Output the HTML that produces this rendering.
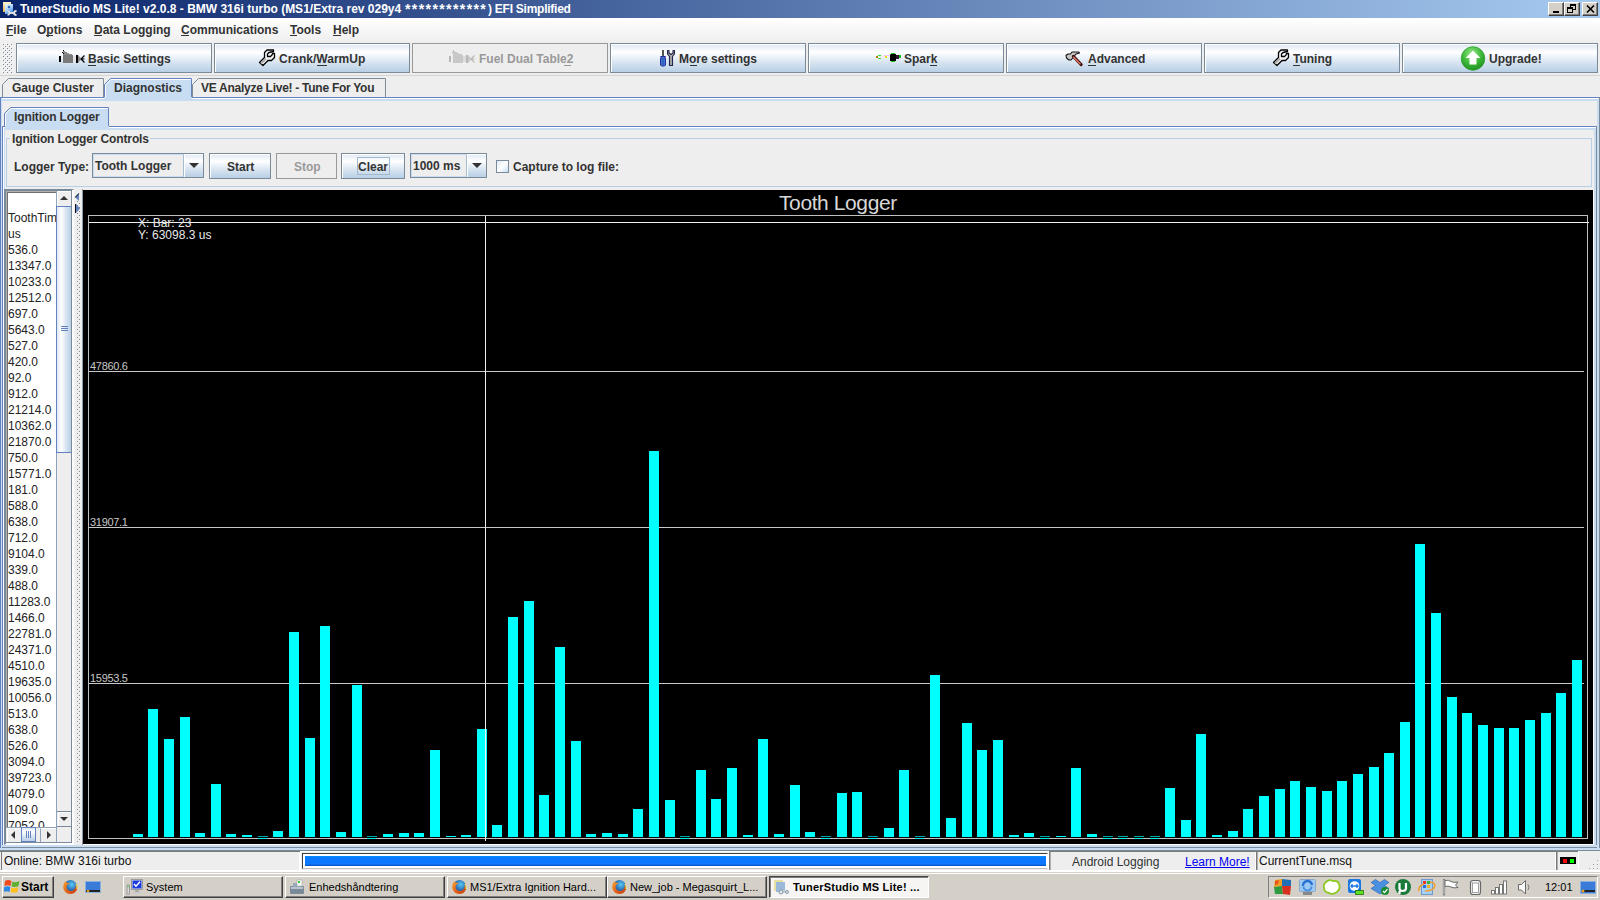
<!DOCTYPE html>
<html><head><meta charset="utf-8">
<style>
*{box-sizing:border-box}
html,body{margin:0;padding:0}
body{width:1600px;height:900px;overflow:hidden;position:relative;background:#eeeeee;font-family:"Liberation Sans",sans-serif;color:#333333}
.a{position:absolute}
.t{position:absolute;white-space:nowrap;line-height:1}
.b12{font-weight:bold;font-size:12px}
.r12{font-size:12px}
u{text-decoration:none;border-bottom:1px solid currentColor}
.btn{position:absolute;border:1px solid #7a8a99;background:linear-gradient(#dde8f3 0%,#ffffff 30%,#dde8f3 60%,#b8cfe5 100%)}
.btn:before{content:"";position:absolute;left:0;top:0;right:0;bottom:0;border-left:1px solid #fff;border-top:1px solid #fff}
.dis{position:absolute;border:1px solid #999;background:#eeeeee}
</style></head><body>
<!-- title bar -->
<div class="a" style="left:0;top:0;width:1600px;height:18px;background:linear-gradient(to right,#0a246a 0%,#a6caf0 100%)"></div>
<svg class="a" style="left:0;top:0" width="18" height="18" viewBox="0 0 18 18">
<defs><linearGradient id="tiy" x1="0" y1="0" x2="0" y2="1"><stop offset="0" stop-color="#fff4c8"/><stop offset="1" stop-color="#e8b850"/></linearGradient><linearGradient id="tib" x1="0" y1="0" x2="0.6" y2="1"><stop offset="0" stop-color="#f0f8ff"/><stop offset="0.5" stop-color="#b8d8f8"/><stop offset="1" stop-color="#3a90f0"/></linearGradient></defs>
<path d="M3 2 L11 2 L11 4 L5 4 L5 12 L3 12 Z" fill="url(#tiy)"/>
<rect x="5" y="4" width="8" height="10" fill="url(#tib)"/>
<circle cx="9" cy="7" r="1.3" fill="#2a6ab8"/>
<path d="M8.5 13 L15 13" stroke="#d8d8d8" stroke-width="2"/><path d="M7.5 11 Q9.5 11 9.5 13 Q9.5 15 7.5 15" stroke="#e0e0e0" stroke-width="1.5" fill="none"/><path d="M16.5 11 Q14 11 14 13 Q14 15 16.5 15" stroke="#e8e8e8" stroke-width="1.8" fill="none"/>
</svg>
<div class="t" style="left:20px;top:3px;font-weight:bold;font-size:12px;color:#fff">TunerStudio MS Lite! v2.0.8 - BMW 316i turbo (MS1/Extra rev 029y4</div>
<div class="t" style="left:405px;top:2px;font-weight:bold;font-size:14px;letter-spacing:1.4px;color:#fff">************</div>
<div class="t" style="left:488px;top:3px;font-weight:bold;font-size:12px;letter-spacing:-0.25px;color:#fff">) EFI Simplified</div>
<!-- window buttons -->
<div class="a" style="left:1548px;top:2px;width:16px;height:14px;background:#d4d0c8;border-top:1px solid #fff;border-left:1px solid #fff;border-right:1px solid #404040;border-bottom:1px solid #404040;box-shadow:inset -1px -1px #808080"><div class="a" style="left:4px;top:8px;width:6px;height:2px;background:#000"></div></div>
<div class="a" style="left:1564px;top:2px;width:16px;height:14px;background:#d4d0c8;border-top:1px solid #fff;border-left:1px solid #fff;border-right:1px solid #404040;border-bottom:1px solid #404040;box-shadow:inset -1px -1px #808080"><div class="a" style="left:5px;top:1px;width:6px;height:6px;border:1px solid #000;border-top-width:2px"></div><div class="a" style="left:2px;top:4px;width:6px;height:6px;border:1px solid #000;border-top-width:2px;background:#d4d0c8"></div></div>
<div class="a" style="left:1582px;top:2px;width:16px;height:14px;background:#d4d0c8;border-top:1px solid #fff;border-left:1px solid #fff;border-right:1px solid #404040;border-bottom:1px solid #404040;box-shadow:inset -1px -1px #808080"><svg class="a" style="left:3px;top:2px" width="9" height="8" viewBox="0 0 9 8"><path d="M1 0.5 L8 7.5 M8 0.5 L1 7.5" stroke="#000" stroke-width="1.6"/></svg></div>
<!-- menu bar -->
<div class="a" style="left:0;top:18px;width:1600px;height:24px;background:linear-gradient(#ffffff,#efefef)"></div>
<div class="t b12" style="left:6px;top:24px;color:#333">File</div>
<div class="t b12" style="left:37px;top:24px;color:#333">Options</div>
<div class="t b12" style="left:94px;top:24px;color:#333">Data Logging</div>
<div class="t b12" style="left:181px;top:24px;color:#333">Communications</div>
<div class="t b12" style="left:290px;top:24px;color:#333">Tools</div>
<div class="t b12" style="left:333px;top:24px;color:#333">Help</div>
<!-- menu underlines -->
<div class="a" style="left:6px;top:35px;width:7px;height:1px;background:#333"></div>
<div class="a" style="left:46px;top:35px;width:7px;height:1px;background:#333"></div>
<div class="a" style="left:94px;top:35px;width:8px;height:1px;background:#333"></div>
<div class="a" style="left:181px;top:35px;width:8px;height:1px;background:#333"></div>
<div class="a" style="left:290px;top:35px;width:7px;height:1px;background:#333"></div>
<div class="a" style="left:333px;top:35px;width:8px;height:1px;background:#333"></div>
<!-- toolbar grip -->
<svg class="a" style="left:2px;top:43px" width="11" height="30" shape-rendering="crispEdges"><defs><pattern id="gp" x="0" y="0" width="4" height="4" patternUnits="userSpaceOnUse"><rect x="1" y="1" width="1" height="1" fill="#7a8a99"/><rect x="3" y="3" width="1" height="1" fill="#7a8a99"/><rect x="2" y="2" width="1" height="1" fill="#fff"/><rect x="0" y="0" width="1" height="1" fill="#fff"/></pattern></defs><rect width="11" height="30" fill="url(#gp)"/></svg>
<div class="a" style="left:0;top:75px;width:1600px;height:1px;background:#d4d4d4"></div>
<!-- buttons -->
<div class="btn" style="left:16px;top:43px;width:196px;height:30px"></div>
<div class="btn" style="left:214px;top:43px;width:196px;height:30px"></div>
<div class="dis" style="left:412px;top:43px;width:196px;height:30px"></div>
<div class="btn" style="left:610px;top:43px;width:196px;height:30px"></div>
<div class="btn" style="left:808px;top:43px;width:196px;height:30px"></div>
<div class="btn" style="left:1006px;top:43px;width:196px;height:30px"></div>
<div class="btn" style="left:1204px;top:43px;width:196px;height:30px"></div>
<div class="btn" style="left:1402px;top:43px;width:196px;height:30px"></div>
<div class="t b12" style="left:88px;top:53px">Basic Settings</div>
<div class="a" style="left:88px;top:65px;width:8px;height:1px;background:#333"></div>
<div class="t b12" style="left:279px;top:53px">Crank/WarmUp</div>
<div class="a" style="left:317px;top:65px;width:10px;height:1px;background:#333"></div>
<div class="t b12" style="left:479px;top:53px;color:#999">Fuel Dual Table2</div>
<div class="a" style="left:564px;top:65px;width:7px;height:1px;background:#999"></div>
<div class="t b12" style="left:679px;top:53px">More settings</div>
<div class="a" style="left:690px;top:65px;width:7px;height:1px;background:#333"></div>
<div class="t b12" style="left:904px;top:53px">Spark</div>
<div class="a" style="left:930px;top:65px;width:7px;height:1px;background:#333"></div>
<div class="t b12" style="left:1088px;top:53px">Advanced</div>
<div class="a" style="left:1088px;top:65px;width:8px;height:1px;background:#333"></div>
<div class="t b12" style="left:1293px;top:53px">Tuning</div>
<div class="a" style="left:1293px;top:65px;width:7px;height:1px;background:#333"></div>
<div class="t b12" style="left:1489px;top:53px">Upgrade!</div>
<!-- icons -->
<svg class="a" style="left:58px;top:49px" width="28" height="16" viewBox="0 0 28 16" shape-rendering="crispEdges">
<rect x="1" y="7" width="2" height="6" fill="#000"/><rect x="5" y="6" width="10" height="8" fill="#7a7a7a"/><path d="M5 6 L5.5 2 L15 6 Z" fill="#8a8a8a"/><rect x="5" y="1" width="1" height="1" fill="#000"/><rect x="4" y="3" width="1" height="1" fill="#000"/><rect x="5" y="4" width="1" height="1" fill="#000"/><rect x="15" y="7" width="3" height="6" fill="#e4e4e4"/><rect x="18" y="6" width="2" height="8" fill="#000"/><path d="M20 6 L23.5 10 L20 14 Z" fill="#8a8a8a" shape-rendering="auto"/><path d="M23 10 L26.5 6.5 M23 10 L26.5 10 M23 10 L26.5 13.5" stroke="#000" stroke-width="1.2" shape-rendering="auto"/>
</svg>
<svg class="a" style="left:448px;top:49px" width="28" height="16" viewBox="0 0 28 16" shape-rendering="crispEdges">
<rect x="1" y="7" width="2" height="6" fill="#b8b8b8"/><rect x="5" y="6" width="10" height="8" fill="#c8c8c8"/><path d="M5 6 L5.5 2 L15 6 Z" fill="#c8c8c8"/><rect x="5" y="1" width="1" height="1" fill="#b8b8b8"/><rect x="4" y="3" width="1" height="1" fill="#b8b8b8"/><rect x="15" y="7" width="3" height="6" fill="#dcdcdc"/><rect x="18" y="6" width="2" height="8" fill="#b8b8b8"/><path d="M20 6 L23.5 10 L20 14 Z" fill="#c8c8c8" shape-rendering="auto"/><path d="M23 10 L26.5 6.5 M23 10 L26.5 10 M23 10 L26.5 13.5" stroke="#b8b8b8" stroke-width="1.2" shape-rendering="auto"/>
</svg>
<svg class="a" style="left:258px;top:49px" width="18" height="18" viewBox="0 0 18 18">
<path d="M1.5 13.5 L6.5 8.5 L6.5 3.5 L9 1 L15.5 1 L15.5 2.5 L11 3.5 L9.5 5 L9.5 7.5 L12.5 7.5 L14 6 L14.5 4.5 L16.5 4.5 L16.5 8.5 L13.5 11.5 L10 11.5 L5 16.5 Z" fill="#f4f4f4" stroke="#000" stroke-width="1.3" stroke-linejoin="round"/>
<path d="M3 14.5 L8 9.5" stroke="#b0b0b0" stroke-width="2"/>
</svg>
<svg class="a" style="left:1272px;top:49px" width="18" height="18" viewBox="0 0 18 18">
<path d="M1.5 13.5 L6.5 8.5 L6.5 3.5 L9 1 L15.5 1 L15.5 2.5 L11 3.5 L9.5 5 L9.5 7.5 L12.5 7.5 L14 6 L14.5 4.5 L16.5 4.5 L16.5 8.5 L13.5 11.5 L10 11.5 L5 16.5 Z" fill="#f4f4f4" stroke="#000" stroke-width="1.3" stroke-linejoin="round"/>
<path d="M3 14.5 L8 9.5" stroke="#b0b0b0" stroke-width="2"/>
</svg>
<svg class="a" style="left:660px;top:49px" width="16" height="18" viewBox="0 0 16 18">
<rect x="2" y="1" width="2" height="6" fill="#555"/><path d="M0.5 7.5 L5.5 7.5 L4.5 9 L5.5 9 L5.5 16 L4.5 17 L1.5 17 L0.5 16 L0.5 9 L1.5 9 Z" fill="#3a7ad0" stroke="#2a2a9a" stroke-width="1"/><rect x="2.5" y="9" width="1" height="7" fill="#2a4ab0"/>
<path d="M7.5 1.5 L7.5 5 L9.5 7.5 L9.5 16.5 L12.5 16.5 L12.5 7.5 L14.5 5 L14.5 1.5 L13 1.5 L13 4 L11 5.5 L9 4 L9 1.5 Z" fill="#a8a8a8" stroke="#22224a" stroke-width="1.1" stroke-linejoin="round"/>
</svg>
<svg class="a" style="left:875px;top:53px" width="26" height="10" viewBox="0 0 26 10" shape-rendering="crispEdges">
<rect x="1" y="3" width="2" height="2" fill="#b08000"/><rect x="3" y="2" width="3" height="1" fill="#30e030"/><rect x="3" y="5" width="3" height="1" fill="#30e030"/><rect x="6" y="3" width="3" height="2" fill="#f4e8f4"/><rect x="10" y="3" width="2" height="2" fill="#e8e000"/><rect x="9" y="2" width="6" height="1" fill="#f0c8f0"/><rect x="15" y="1" width="6" height="7" fill="#000"/><rect x="16" y="0" width="4" height="1" fill="#20c020"/><rect x="16" y="8" width="4" height="1" fill="#20c020"/><rect x="15" y="1" width="1" height="1" fill="#20a020"/><rect x="21" y="2" width="3" height="4" fill="#301830"/><rect x="24" y="2" width="2" height="3" fill="#10c010"/>
</svg>
<svg class="a" style="left:1065px;top:51px" width="18" height="16" viewBox="0 0 18 16">
<path d="M1 4.5 L3 3 L5.5 3 L7 1 L13.5 1 L14.5 2 L11 3 L9 5.5 L6 9 L4 9 L1.5 7 Z" fill="#c8c8c8" stroke="#111" stroke-width="1.1" stroke-linejoin="round"/>
<path d="M8.5 5.5 L16 13.5" stroke="#3a0a0a" stroke-width="3.2" stroke-linecap="round"/><path d="M8.3 5.8 L15.5 13.3" stroke="#e8806a" stroke-width="1.3"/>
</svg>
<svg class="a" style="left:1460px;top:46px" width="26" height="25" viewBox="0 0 26 25">
<defs><radialGradient id="gg" cx="0.45" cy="0.3" r="0.75"><stop offset="0" stop-color="#9ae884"/><stop offset="0.55" stop-color="#3cb83a"/><stop offset="1" stop-color="#1c8a1c"/></radialGradient></defs>
<circle cx="13" cy="12.5" r="11.8" fill="url(#gg)" stroke="#30a030" stroke-width="0.8"/><path d="M13 4.5 L20.5 12 L16.5 12 L16.5 18.5 L9.5 18.5 L9.5 12 L5.5 12 Z" fill="#fff"/>
</svg>
<!-- outer tabs -->
<svg class="a" style="left:0;top:76px" width="400" height="26" viewBox="0 0 400 26">
<path d="M2.5 21.5 L2.5 8.5 L8.5 2.5 L103.5 2.5 L103.5 21.5" fill="#eeeeee" stroke="#7e8c9a" stroke-width="1"/>
<path d="M192.5 21.5 L192.5 8.5 L198.5 2.5 L385.5 2.5 L385.5 21.5" fill="#eeeeee" stroke="#7e8c9a" stroke-width="1"/>
<path d="M104.5 22 L104.5 8.5 L110.5 2.5 L191.5 2.5 L191.5 22" fill="#c8ddf2" stroke="#6382bf" stroke-width="1"/>
<path d="M105.5 22 L105.5 9 L111 3.5 L191 3.5" fill="none" stroke="#ffffff" stroke-width="1"/>
<rect x="104" y="21" width="88" height="4" fill="#c8ddf2"/>
</svg>
<!-- outer panel -->
<div class="a" style="left:0;top:97px;width:104px;height:1px;background:#6382bf"></div>
<div class="a" style="left:192px;top:97px;width:1408px;height:1px;background:#6382bf"></div>
<div class="a" style="left:1px;top:98px;width:103px;height:1px;background:#fff"></div>
<div class="a" style="left:192px;top:98px;width:1406px;height:1px;background:#fff"></div>
<div class="a" style="left:1px;top:99px;width:1597px;height:2px;background:#c8ddf2"></div>
<div class="a" style="left:0;top:97px;width:1px;height:754px;background:#6382bf"></div>
<div class="a" style="left:1px;top:98px;width:1px;height:752px;background:#c8ddf2"></div>
<div class="a" style="left:1599px;top:97px;width:1px;height:754px;background:#7a8a99"></div>
<div class="a" style="left:1597px;top:99px;width:2px;height:752px;background:#c8ddf2"></div>
<div class="a" style="left:0;top:848px;width:1600px;height:2px;background:#c8ddf2"></div>
<div class="a" style="left:0;top:850px;width:1600px;height:1px;background:#7a8a99"></div>
<!-- inner tab -->
<svg class="a" style="left:0;top:105px" width="120" height="26" viewBox="0 0 120 26">
<path d="M4.5 22 L4.5 8.5 L10.5 2.5 L108.5 2.5 L108.5 22" fill="#c8ddf2" stroke="#6382bf" stroke-width="1"/>
<path d="M5.5 22 L5.5 9 L11 3.5 L108 3.5" fill="none" stroke="#ffffff" stroke-width="1"/>
<rect x="4" y="21" width="105" height="4" fill="#c8ddf2"/>
</svg>
<div class="t b12" style="left:114px;top:82px">Diagnostics</div>
<div class="t b12" style="left:12px;top:82px">Gauge Cluster</div>
<div class="t b12" style="left:201px;top:82px;letter-spacing:-0.27px">VE Analyze Live! - Tune For You</div>
<div class="t b12" style="left:14px;top:111px;letter-spacing:-0.12px">Ignition Logger</div>
<!-- inner panel -->
<div class="a" style="left:2px;top:126px;width:3px;height:1px;background:#6382bf"></div>
<div class="a" style="left:109px;top:126px;width:1488px;height:1px;background:#6382bf"></div>
<div class="a" style="left:3px;top:127px;width:2px;height:1px;background:#fff"></div>
<div class="a" style="left:109px;top:127px;width:1487px;height:1px;background:#fff"></div>
<div class="a" style="left:3px;top:128px;width:1593px;height:2px;background:#c8ddf2"></div>
<div class="a" style="left:2px;top:126px;width:1px;height:722px;background:#6382bf"></div>
<div class="a" style="left:3px;top:127px;width:1px;height:720px;background:#ffffff"></div>
<div class="a" style="left:4px;top:128px;width:1px;height:717px;background:#c8ddf2"></div>
<div class="a" style="left:1596px;top:126px;width:1px;height:722px;background:#7a8a99"></div>
<div class="a" style="left:1594px;top:128px;width:2px;height:718px;background:#c8ddf2"></div>
<div class="a" style="left:2px;top:845px;width:1595px;height:2px;background:#c8ddf2"></div>
<div class="a" style="left:2px;top:847px;width:1595px;height:1px;background:#7a8a99"></div>
<!-- group box -->
<div class="a" style="left:6px;top:138px;width:1586px;height:49px;border:1px solid #b8cfe5"></div>
<div class="a" style="left:10px;top:132px;width:140px;height:12px;background:#eeeeee"></div>
<div class="t b12" style="left:12px;top:133px;letter-spacing:-0.13px">Ignition Logger Controls</div>
<div class="t b12" style="left:14px;top:161px">Logger Type:</div>
<!-- combo 1 -->
<div class="a" style="left:92px;top:153px;width:112px;height:25px;border:1px solid #7a8a99;background:#eeeeee"></div>
<div class="a" style="left:93px;top:154px;width:91px;height:23px;border:1px solid #c8ddf2;border-right-color:#a8bcd0"></div>
<div class="t b12" style="left:95px;top:160px;color:#333">Tooth Logger</div>
<div class="btn" style="left:184px;top:153px;width:20px;height:25px;border-left:none"></div>
<div class="a" style="left:189px;top:163px;width:0;height:0;border-left:5px solid transparent;border-right:5px solid transparent;border-top:5px solid #333"></div>
<!-- buttons -->
<div class="btn" style="left:209px;top:153px;width:62px;height:26px"></div>
<div class="t b12" style="left:227px;top:161px">Start</div>
<div class="dis" style="left:276px;top:153px;width:61px;height:26px"></div>
<div class="t b12" style="left:294px;top:161px;color:#999">Stop</div>
<div class="btn" style="left:341px;top:153px;width:64px;height:26px"></div>
<div class="a" style="left:357px;top:157px;width:33px;height:18px;border:1px solid #a3b8cc"></div>
<div class="t b12" style="left:358px;top:161px">Clear</div>
<!-- combo 2 -->
<div class="a" style="left:410px;top:153px;width:77px;height:25px;border:1px solid #7a8a99;background:#eeeeee"></div>
<div class="a" style="left:411px;top:154px;width:56px;height:23px;border:1px solid #c8ddf2;border-right-color:#a8bcd0"></div>
<div class="t b12" style="left:413px;top:160px;color:#333">1000 ms</div>
<div class="btn" style="left:467px;top:153px;width:20px;height:25px;border-left:none"></div>
<div class="a" style="left:472px;top:163px;width:0;height:0;border-left:5px solid transparent;border-right:5px solid transparent;border-top:5px solid #333"></div>
<!-- checkbox -->
<div class="a" style="left:496px;top:160px;width:13px;height:13px;border:1px solid #7a8a99;background:linear-gradient(135deg,#dde8f3,#ffffff 50%,#c8ddf2)"></div>
<div class="t b12" style="left:513px;top:161px">Capture to log file:</div>
<div class="a" style="left:4px;top:189px;width:70px;height:656px;border-left:2px solid #7a8a99;border-top:2px solid #7a8a99;border-right:2px solid #fff;border-bottom:1px solid #fff;background:#fff"></div>
<div class="a" style="left:8px;top:191px;width:48px;height:636px;overflow:hidden;background:#fff">
<div class="t r12" style="left:0;top:21px;color:#222">ToothTime</div>
<div class="t r12" style="left:0;top:37px;color:#222">us</div>
<div class="t r12" style="left:0;top:53px;color:#222">536.0</div>
<div class="t r12" style="left:0;top:69px;color:#222">13347.0</div>
<div class="t r12" style="left:0;top:85px;color:#222">10233.0</div>
<div class="t r12" style="left:0;top:101px;color:#222">12512.0</div>
<div class="t r12" style="left:0;top:117px;color:#222">697.0</div>
<div class="t r12" style="left:0;top:133px;color:#222">5643.0</div>
<div class="t r12" style="left:0;top:149px;color:#222">527.0</div>
<div class="t r12" style="left:0;top:165px;color:#222">420.0</div>
<div class="t r12" style="left:0;top:181px;color:#222">92.0</div>
<div class="t r12" style="left:0;top:197px;color:#222">912.0</div>
<div class="t r12" style="left:0;top:213px;color:#222">21214.0</div>
<div class="t r12" style="left:0;top:229px;color:#222">10362.0</div>
<div class="t r12" style="left:0;top:245px;color:#222">21870.0</div>
<div class="t r12" style="left:0;top:261px;color:#222">750.0</div>
<div class="t r12" style="left:0;top:277px;color:#222">15771.0</div>
<div class="t r12" style="left:0;top:293px;color:#222">181.0</div>
<div class="t r12" style="left:0;top:309px;color:#222">588.0</div>
<div class="t r12" style="left:0;top:325px;color:#222">638.0</div>
<div class="t r12" style="left:0;top:341px;color:#222">712.0</div>
<div class="t r12" style="left:0;top:357px;color:#222">9104.0</div>
<div class="t r12" style="left:0;top:373px;color:#222">339.0</div>
<div class="t r12" style="left:0;top:389px;color:#222">488.0</div>
<div class="t r12" style="left:0;top:405px;color:#222">11283.0</div>
<div class="t r12" style="left:0;top:421px;color:#222">1466.0</div>
<div class="t r12" style="left:0;top:437px;color:#222">22781.0</div>
<div class="t r12" style="left:0;top:453px;color:#222">24371.0</div>
<div class="t r12" style="left:0;top:469px;color:#222">4510.0</div>
<div class="t r12" style="left:0;top:485px;color:#222">19635.0</div>
<div class="t r12" style="left:0;top:501px;color:#222">10056.0</div>
<div class="t r12" style="left:0;top:517px;color:#222">513.0</div>
<div class="t r12" style="left:0;top:533px;color:#222">638.0</div>
<div class="t r12" style="left:0;top:549px;color:#222">526.0</div>
<div class="t r12" style="left:0;top:565px;color:#222">3094.0</div>
<div class="t r12" style="left:0;top:581px;color:#222">39723.0</div>
<div class="t r12" style="left:0;top:597px;color:#222">4079.0</div>
<div class="t r12" style="left:0;top:613px;color:#222">109.0</div>
<div class="t r12" style="left:0;top:629px;color:#222">7052.0</div>
</div>
<div class="a" style="left:6px;top:191px;width:50px;height:636px;border-left:1px solid #b0b0b0;border-top:1px solid #b0b0b0"></div>
<div class="a" style="left:7px;top:192px;width:49px;height:635px;border-left:1px solid #707070;border-top:1px solid #707070"></div>
<div class="a" style="left:56px;top:191px;width:16px;height:636px;background:#eeeeee;border-left:1px solid #8fa3b8;border-right:1px solid #7a8a99"></div>
<div class="a" style="left:57px;top:191px;width:14px;height:15px;background:#eeeeee;border-top:1px solid #fff;border-left:1px solid #fff"></div>
<div class="a" style="left:60px;top:196px;width:0;height:0;border-left:4px solid transparent;border-right:4px solid transparent;border-bottom:4px solid #333"></div>
<div class="a" style="left:56px;top:206px;width:15px;height:247px;border:1px solid #6382bf;border-right:none;background:linear-gradient(to right,#dde8f3 0%,#ffffff 30%,#dde8f3 60%,#b8cfe5 100%)"></div>
<div class="a" style="left:61px;top:326px;width:7px;height:1px;background:#6382bf;box-shadow:0 2px #6382bf,0 4px #6382bf"></div>
<div class="a" style="left:57px;top:811px;width:14px;height:16px;background:#eeeeee;border-top:1px solid #7a8a99;border-bottom:1px solid #7a8a99"></div>
<div class="a" style="left:58px;top:812px;width:13px;height:14px;border-top:1px solid #fff;border-left:1px solid #fff"></div>
<div class="a" style="left:60px;top:817px;width:0;height:0;border-left:4px solid transparent;border-right:4px solid transparent;border-top:4px solid #333"></div>
<div class="a" style="left:6px;top:827px;width:50px;height:16px;background:#eeeeee;border-top:1px solid #8fa3b8;border-bottom:1px solid #7a8a99"></div>
<div class="a" style="left:7px;top:828px;width:14px;height:14px;border-top:1px solid #fff;border-left:1px solid #fff"></div>
<div class="a" style="left:11px;top:831px;width:0;height:0;border-top:4px solid transparent;border-bottom:4px solid transparent;border-right:4px solid #333"></div>
<div class="a" style="left:21px;top:827px;width:15px;height:15px;border:1px solid #6382bf;background:linear-gradient(#dde8f3 0%,#ffffff 30%,#dde8f3 60%,#b8cfe5 100%)"></div>
<div class="a" style="left:26px;top:831px;width:1px;height:7px;background:#6382bf;box-shadow:2px 0 #6382bf,4px 0 #6382bf"></div>
<div class="a" style="left:40px;top:828px;width:16px;height:14px;border-left:1px solid #8fa3b8;border-top:1px solid #fff"></div>
<div class="a" style="left:47px;top:831px;width:0;height:0;border-top:4px solid transparent;border-bottom:4px solid transparent;border-left:4px solid #333"></div>
<div class="a" style="left:56px;top:827px;width:16px;height:16px;background:#eeeeee;border-left:1px solid #8fa3b8;border-right:1px solid #7a8a99;border-bottom:1px solid #7a8a99"></div>
<div class="a" style="left:72px;top:190px;width:2px;height:654px;background:#fff"></div>
<svg class="a" style="left:77px;top:200px" width="3" height="643" shape-rendering="crispEdges"><defs><pattern id="sp" x="0" y="0" width="4" height="4" patternUnits="userSpaceOnUse"><rect x="0" y="1" width="1" height="1" fill="#808a94"/><rect x="2" y="3" width="1" height="1" fill="#808a94"/></pattern></defs><rect width="3" height="643" fill="url(#sp)"/></svg>
<svg class="a" style="left:74px;top:192px" width="7" height="23"><path d="M5 1 L5 9 L1 5 Z" fill="#6382bf"/><path d="M1.2 5.5 L4.8 1.5" stroke="#111" stroke-width="1"/><path d="M2 12 L6 16.5 L2 21 Z" fill="#6382bf"/><path d="M1.5 12 L1.5 21" stroke="#111" stroke-width="1"/></svg>
<div class="a" style="left:82px;top:189px;width:1px;height:656px;background:#8a9aa8"></div>
<div class="a" style="left:83px;top:190px;width:1511px;height:654px;background:#000"></div>
<div class="a" style="left:1593px;top:190px;width:1px;height:655px;background:#fff"></div>
<div class="a" style="left:83px;top:844px;width:1511px;height:1px;background:#fff"></div>
<div class="a" style="left:88px;top:215px;width:1500px;height:624px;border:1px solid #c0c0c0"></div>
<div class="a" style="left:89px;top:371px;width:1495px;height:1px;background:#c8c8c8"></div>
<div class="a" style="left:89px;top:527px;width:1495px;height:1px;background:#c8c8c8"></div>
<div class="a" style="left:89px;top:683px;width:1495px;height:1px;background:#c8c8c8"></div>
<div class="a" style="left:133px;top:834px;width:10px;height:3px;background:#00ffff"></div>
<div class="a" style="left:148px;top:709px;width:10px;height:128px;background:#00ffff"></div>
<div class="a" style="left:164px;top:739px;width:10px;height:98px;background:#00ffff"></div>
<div class="a" style="left:180px;top:717px;width:10px;height:120px;background:#00ffff"></div>
<div class="a" style="left:195px;top:833px;width:10px;height:4px;background:#00ffff"></div>
<div class="a" style="left:211px;top:784px;width:10px;height:53px;background:#00ffff"></div>
<div class="a" style="left:226px;top:834px;width:10px;height:3px;background:#00ffff"></div>
<div class="a" style="left:242px;top:835px;width:10px;height:2px;background:#00ffff"></div>
<div class="a" style="left:258px;top:836px;width:10px;height:1px;background:#00a8a8"></div>
<div class="a" style="left:258px;top:838px;width:9px;height:1px;background:#00f0f0"></div>
<div class="a" style="left:273px;top:831px;width:10px;height:6px;background:#00ffff"></div>
<div class="a" style="left:289px;top:632px;width:10px;height:205px;background:#00ffff"></div>
<div class="a" style="left:305px;top:738px;width:10px;height:99px;background:#00ffff"></div>
<div class="a" style="left:320px;top:626px;width:10px;height:211px;background:#00ffff"></div>
<div class="a" style="left:336px;top:832px;width:10px;height:5px;background:#00ffff"></div>
<div class="a" style="left:352px;top:685px;width:10px;height:152px;background:#00ffff"></div>
<div class="a" style="left:367px;top:836px;width:10px;height:1px;background:#00a8a8"></div>
<div class="a" style="left:367px;top:838px;width:9px;height:1px;background:#00f0f0"></div>
<div class="a" style="left:383px;top:834px;width:10px;height:3px;background:#00ffff"></div>
<div class="a" style="left:399px;top:833px;width:10px;height:4px;background:#00ffff"></div>
<div class="a" style="left:414px;top:833px;width:10px;height:4px;background:#00ffff"></div>
<div class="a" style="left:430px;top:750px;width:10px;height:87px;background:#00ffff"></div>
<div class="a" style="left:446px;top:836px;width:10px;height:1px;background:#00ffff"></div>
<div class="a" style="left:461px;top:835px;width:10px;height:2px;background:#00ffff"></div>
<div class="a" style="left:477px;top:729px;width:10px;height:108px;background:#00ffff"></div>
<div class="a" style="left:492px;top:825px;width:10px;height:12px;background:#00ffff"></div>
<div class="a" style="left:508px;top:617px;width:10px;height:220px;background:#00ffff"></div>
<div class="a" style="left:524px;top:601px;width:10px;height:236px;background:#00ffff"></div>
<div class="a" style="left:539px;top:795px;width:10px;height:42px;background:#00ffff"></div>
<div class="a" style="left:555px;top:647px;width:10px;height:190px;background:#00ffff"></div>
<div class="a" style="left:571px;top:741px;width:10px;height:96px;background:#00ffff"></div>
<div class="a" style="left:586px;top:834px;width:10px;height:3px;background:#00ffff"></div>
<div class="a" style="left:602px;top:833px;width:10px;height:4px;background:#00ffff"></div>
<div class="a" style="left:618px;top:834px;width:10px;height:3px;background:#00ffff"></div>
<div class="a" style="left:633px;top:809px;width:10px;height:28px;background:#00ffff"></div>
<div class="a" style="left:649px;top:451px;width:10px;height:386px;background:#00ffff"></div>
<div class="a" style="left:665px;top:800px;width:10px;height:37px;background:#00ffff"></div>
<div class="a" style="left:680px;top:836px;width:10px;height:1px;background:#00a8a8"></div>
<div class="a" style="left:680px;top:838px;width:9px;height:1px;background:#00f0f0"></div>
<div class="a" style="left:696px;top:770px;width:10px;height:67px;background:#00ffff"></div>
<div class="a" style="left:711px;top:799px;width:10px;height:38px;background:#00ffff"></div>
<div class="a" style="left:727px;top:768px;width:10px;height:69px;background:#00ffff"></div>
<div class="a" style="left:743px;top:835px;width:10px;height:2px;background:#00ffff"></div>
<div class="a" style="left:758px;top:739px;width:10px;height:98px;background:#00ffff"></div>
<div class="a" style="left:774px;top:834px;width:10px;height:3px;background:#00ffff"></div>
<div class="a" style="left:790px;top:785px;width:10px;height:52px;background:#00ffff"></div>
<div class="a" style="left:805px;top:832px;width:10px;height:5px;background:#00ffff"></div>
<div class="a" style="left:821px;top:836px;width:10px;height:1px;background:#00a8a8"></div>
<div class="a" style="left:821px;top:838px;width:9px;height:1px;background:#00f0f0"></div>
<div class="a" style="left:837px;top:793px;width:10px;height:44px;background:#00ffff"></div>
<div class="a" style="left:852px;top:792px;width:10px;height:45px;background:#00ffff"></div>
<div class="a" style="left:868px;top:836px;width:10px;height:1px;background:#00a8a8"></div>
<div class="a" style="left:868px;top:838px;width:9px;height:1px;background:#00f0f0"></div>
<div class="a" style="left:884px;top:828px;width:10px;height:9px;background:#00ffff"></div>
<div class="a" style="left:899px;top:770px;width:10px;height:67px;background:#00ffff"></div>
<div class="a" style="left:915px;top:836px;width:10px;height:1px;background:#00a8a8"></div>
<div class="a" style="left:915px;top:838px;width:9px;height:1px;background:#00f0f0"></div>
<div class="a" style="left:930px;top:675px;width:10px;height:162px;background:#00ffff"></div>
<div class="a" style="left:946px;top:818px;width:10px;height:19px;background:#00ffff"></div>
<div class="a" style="left:962px;top:723px;width:10px;height:114px;background:#00ffff"></div>
<div class="a" style="left:977px;top:750px;width:10px;height:87px;background:#00ffff"></div>
<div class="a" style="left:993px;top:740px;width:10px;height:97px;background:#00ffff"></div>
<div class="a" style="left:1009px;top:835px;width:10px;height:2px;background:#00ffff"></div>
<div class="a" style="left:1024px;top:833px;width:10px;height:4px;background:#00ffff"></div>
<div class="a" style="left:1040px;top:836px;width:10px;height:1px;background:#00a8a8"></div>
<div class="a" style="left:1040px;top:838px;width:9px;height:1px;background:#00f0f0"></div>
<div class="a" style="left:1056px;top:836px;width:10px;height:1px;background:#00ffff"></div>
<div class="a" style="left:1071px;top:768px;width:10px;height:69px;background:#00ffff"></div>
<div class="a" style="left:1087px;top:834px;width:10px;height:3px;background:#00ffff"></div>
<div class="a" style="left:1103px;top:836px;width:10px;height:1px;background:#00a8a8"></div>
<div class="a" style="left:1103px;top:838px;width:9px;height:1px;background:#00f0f0"></div>
<div class="a" style="left:1118px;top:836px;width:10px;height:1px;background:#00a8a8"></div>
<div class="a" style="left:1118px;top:838px;width:9px;height:1px;background:#00f0f0"></div>
<div class="a" style="left:1134px;top:836px;width:10px;height:1px;background:#00a8a8"></div>
<div class="a" style="left:1134px;top:838px;width:9px;height:1px;background:#00f0f0"></div>
<div class="a" style="left:1150px;top:836px;width:10px;height:1px;background:#00a8a8"></div>
<div class="a" style="left:1150px;top:838px;width:9px;height:1px;background:#00f0f0"></div>
<div class="a" style="left:1165px;top:788px;width:10px;height:49px;background:#00ffff"></div>
<div class="a" style="left:1181px;top:820px;width:10px;height:17px;background:#00ffff"></div>
<div class="a" style="left:1196px;top:734px;width:10px;height:103px;background:#00ffff"></div>
<div class="a" style="left:1212px;top:835px;width:10px;height:2px;background:#00ffff"></div>
<div class="a" style="left:1228px;top:831px;width:10px;height:6px;background:#00ffff"></div>
<div class="a" style="left:1243px;top:809px;width:10px;height:28px;background:#00ffff"></div>
<div class="a" style="left:1259px;top:796px;width:10px;height:41px;background:#00ffff"></div>
<div class="a" style="left:1275px;top:789px;width:10px;height:48px;background:#00ffff"></div>
<div class="a" style="left:1290px;top:781px;width:10px;height:56px;background:#00ffff"></div>
<div class="a" style="left:1306px;top:787px;width:10px;height:50px;background:#00ffff"></div>
<div class="a" style="left:1322px;top:791px;width:10px;height:46px;background:#00ffff"></div>
<div class="a" style="left:1337px;top:781px;width:10px;height:56px;background:#00ffff"></div>
<div class="a" style="left:1353px;top:774px;width:10px;height:63px;background:#00ffff"></div>
<div class="a" style="left:1369px;top:767px;width:10px;height:70px;background:#00ffff"></div>
<div class="a" style="left:1384px;top:753px;width:10px;height:84px;background:#00ffff"></div>
<div class="a" style="left:1400px;top:722px;width:10px;height:115px;background:#00ffff"></div>
<div class="a" style="left:1415px;top:544px;width:10px;height:293px;background:#00ffff"></div>
<div class="a" style="left:1431px;top:613px;width:10px;height:224px;background:#00ffff"></div>
<div class="a" style="left:1447px;top:697px;width:10px;height:140px;background:#00ffff"></div>
<div class="a" style="left:1462px;top:713px;width:10px;height:124px;background:#00ffff"></div>
<div class="a" style="left:1478px;top:725px;width:10px;height:112px;background:#00ffff"></div>
<div class="a" style="left:1494px;top:728px;width:10px;height:109px;background:#00ffff"></div>
<div class="a" style="left:1509px;top:728px;width:10px;height:109px;background:#00ffff"></div>
<div class="a" style="left:1525px;top:720px;width:10px;height:117px;background:#00ffff"></div>
<div class="a" style="left:1541px;top:713px;width:10px;height:124px;background:#00ffff"></div>
<div class="a" style="left:1556px;top:693px;width:10px;height:144px;background:#00ffff"></div>
<div class="a" style="left:1572px;top:660px;width:10px;height:177px;background:#00ffff"></div>
<div class="t" style="left:90px;top:361px;font-size:11px;letter-spacing:-0.3px;color:#c8c8c8">47860.6</div>
<div class="t" style="left:90px;top:517px;font-size:11px;letter-spacing:-0.3px;color:#c8c8c8">31907.1</div>
<div class="t" style="left:90px;top:673px;font-size:11px;letter-spacing:-0.3px;color:#c8c8c8">15953.5</div>
<div class="t" style="left:779px;top:192px;font-size:21px;letter-spacing:-0.4px;color:#d8d8d8">Tooth Logger</div>
<div class="a" style="left:89px;top:222px;width:1500px;height:1px;background:#f0f0f0"></div>
<div class="a" style="left:485px;top:216px;width:1px;height:625px;background:#f0f0f0"></div>
<div class="t" style="left:138px;top:217px;font-size:12px;color:#e8e8e8">X: Bar: 23</div>
<div class="t" style="left:138px;top:229px;font-size:12px;color:#e8e8e8">Y: 63098.3 us</div>
<!-- status bar -->
<div class="a" style="left:0;top:851px;width:1600px;height:21px;background:#eeeeee"></div>
<div class="a" style="left:0;top:851px;width:300px;height:1px;background:#7a7a7a"></div>
<div class="a" style="left:300px;top:851px;width:749px;height:1px;background:#fff"></div>
<div class="a" style="left:1049px;top:851px;width:529px;height:1px;background:#7a7a7a"></div>
<div class="a" style="left:1px;top:851px;width:1px;height:19px;background:#7a7a7a"></div>
<div class="a" style="left:299px;top:852px;width:1px;height:18px;background:#fff"></div>
<div class="a" style="left:300px;top:851px;width:1px;height:19px;background:#fff"></div>
<div class="t r12" style="left:4px;top:855px;color:#111">Online: BMW 316i turbo</div>
<div class="a" style="left:302px;top:853px;width:746px;height:16px;border-left:1px solid #404040;border-top:1px solid #404040;border-right:1px solid #fff;border-bottom:1px solid #c0c0c0;background:#fff"></div>
<div class="a" style="left:305px;top:856px;width:741px;height:10px;background:linear-gradient(#0090ff 0,#0a78ff 20%,#0a78ff 80%,#0050b8 100%)"></div>
<div class="a" style="left:1048px;top:851px;width:1px;height:19px;background:#fff"></div><div class="a" style="left:1049px;top:851px;width:1px;height:19px;background:#7a7a7a"></div><div class="a" style="left:1050px;top:852px;width:1px;height:18px;background:#b0b0b0"></div>
<div class="t r12" style="left:1072px;top:856px;color:#333">Android Logging</div>
<div class="t r12" style="left:1185px;top:856px;color:#0000ee;text-decoration:underline">Learn More!</div>
<div class="a" style="left:1255px;top:852px;width:1px;height:18px;background:#fff"></div><div class="a" style="left:1256px;top:851px;width:1px;height:19px;background:#7a7a7a"></div><div class="a" style="left:1257px;top:852px;width:1px;height:18px;background:#b0b0b0"></div>
<div class="t r12" style="left:1259px;top:855px;color:#111">CurrentTune.msq</div>
<div class="a" style="left:1555px;top:852px;width:1px;height:18px;background:#fff"></div><div class="a" style="left:1556px;top:851px;width:1px;height:19px;background:#7a7a7a"></div><div class="a" style="left:1557px;top:852px;width:1px;height:18px;background:#b0b0b0"></div><div class="a" style="left:1578px;top:851px;width:1px;height:19px;background:#fff"></div>
<div class="a" style="left:1560px;top:857px;width:16px;height:7px;background:#000"></div>
<div class="a" style="left:1563px;top:859px;width:4px;height:4px;background:#ff0000"></div>
<div class="a" style="left:1570px;top:859px;width:4px;height:4px;background:#00ff00"></div>
<svg class="a" style="left:1588px;top:859px" width="11" height="11" shape-rendering="crispEdges"><rect x="9" y="1" width="1" height="1" fill="#a0a0a0"/><rect x="5" y="5" width="1" height="1" fill="#a0a0a0"/><rect x="9" y="5" width="1" height="1" fill="#a0a0a0"/><rect x="1" y="9" width="1" height="1" fill="#a0a0a0"/><rect x="5" y="9" width="1" height="1" fill="#a0a0a0"/><rect x="9" y="9" width="1" height="1" fill="#a0a0a0"/></svg>
<div class="a" style="left:0;top:870px;width:1600px;height:2px;background:#ffffff"></div>
<!-- taskbar -->
<div class="a" style="left:0;top:872px;width:1600px;height:28px;background:#d4d0c8"></div>
<div class="a" style="left:0;top:873px;width:1600px;height:1px;background:#ffffff"></div>
<div class="a" style="left:2px;top:876px;width:52px;height:22px;border-top:1px solid #fff;border-left:1px solid #fff;border-right:1px solid #404040;border-bottom:1px solid #404040;box-shadow:inset -1px -1px #808080"></div>
<svg class="a" style="left:4px;top:878px" width="16" height="16" viewBox="0 0 16 16">
<path d="M1 3 Q4 1 7.5 3 L6.5 8 Q3.5 6.5 0.5 8 Z" fill="#f04a20"/><path d="M8.5 3.5 Q12 5 15.5 3 L14.5 8 Q11 9.5 7.5 8.5 Z" fill="#60b030"/><path d="M0.3 9 Q3.3 7.5 6.3 9 L5.5 14 Q2.5 12.5 -0.5 14 Z" fill="#2a88e8"/><path d="M7.3 9.5 Q10.8 10.8 14.3 9 L13.5 14 Q10 15.5 6.5 14 Z" fill="#ffc020"/>
</svg>
<div class="t" style="left:21px;top:881px;font-weight:bold;font-size:12px;color:#000">Start</div>
<svg class="a" style="left:62px;top:879px" width="16" height="16" viewBox="0 0 16 16">
<defs><radialGradient id="ffb" cx="0.6" cy="0.35" r="0.6"><stop offset="0" stop-color="#5ac8f8"/><stop offset="1" stop-color="#1a4a98"/></radialGradient><linearGradient id="ffo" x1="0" y1="0" x2="1" y2="1"><stop offset="0" stop-color="#f8a030"/><stop offset="0.6" stop-color="#e05a18"/><stop offset="1" stop-color="#c83a10"/></linearGradient></defs>
<circle cx="8.5" cy="7.5" r="6.5" fill="url(#ffb)"/>
<path d="M3 2.5 Q0.5 6 1.5 10 Q3 14.5 8 15 Q13 15 15 10.5 Q14.5 8 13.5 7 Q13.5 11 10 12 Q6.5 12.5 5 10 Q4 8 5 6 Q6.5 5 7.5 4.5 Q6.5 3.5 5 4 Q4.5 3 3 2.5 Z" fill="url(#ffo)"/>
<path d="M14 5 Q15.5 7.5 15 10" stroke="#f8d040" stroke-width="1.2" fill="none"/>
</svg>
<svg class="a" style="left:85px;top:881px" width="16" height="12" viewBox="0 0 16 12"><rect x="0.5" y="0.5" width="15" height="11" fill="#3a7ad8" stroke="#8ab0e0"/><rect x="1" y="9" width="14" height="2" fill="#222"/><circle cx="3" cy="10" r="1.3" fill="#e8a020"/></svg>
<!-- task buttons -->
<div class="a" style="left:123px;top:876px;width:160px;height:22px;border-top:1px solid #fff;border-left:1px solid #fff;border-right:1px solid #404040;border-bottom:1px solid #404040;box-shadow:inset -1px -1px #808080"></div>
<div class="a" style="left:285px;top:876px;width:160px;height:22px;border-top:1px solid #fff;border-left:1px solid #fff;border-right:1px solid #404040;border-bottom:1px solid #404040;box-shadow:inset -1px -1px #808080"></div>
<div class="a" style="left:447px;top:876px;width:160px;height:22px;border-top:1px solid #fff;border-left:1px solid #fff;border-right:1px solid #404040;border-bottom:1px solid #404040;box-shadow:inset -1px -1px #808080"></div>
<div class="a" style="left:607px;top:876px;width:160px;height:22px;border-top:1px solid #fff;border-left:1px solid #fff;border-right:1px solid #404040;border-bottom:1px solid #404040;box-shadow:inset -1px -1px #808080"></div>
<div class="a" style="left:769px;top:876px;width:160px;height:22px;border-top:1px solid #404040;border-left:1px solid #404040;border-right:1px solid #fff;border-bottom:1px solid #fff;box-shadow:inset 1px 1px #808080;background:#f6f5f3"></div>
<svg class="a" style="left:126px;top:878px" width="18" height="17" viewBox="0 0 18 17"><rect x="1" y="7" width="2.5" height="9" fill="#d8d8d8" stroke="#777" stroke-width="0.6"/><rect x="1.5" y="8" width="1.2" height="1.2" fill="#30d030"/><rect x="5.5" y="1.5" width="11" height="10" fill="#e0e0e0" stroke="#8a8a8a" stroke-width="0.8"/><rect x="6.5" y="2.5" width="9" height="8" fill="#1a3ae0"/><path d="M8 6 L10 8.2 L14 3.8" stroke="#fff" stroke-width="1.5" fill="none"/><rect x="9" y="12" width="4" height="2" fill="#aaa"/><rect x="7" y="14" width="8" height="1.5" fill="#c8c8c8"/></svg>
<div class="t" style="left:146px;top:882px;font-size:11px;color:#000">System</div>
<svg class="a" style="left:289px;top:879px" width="16" height="16" viewBox="0 0 16 16"><rect x="1" y="7" width="14" height="8" rx="1" fill="#7a8a98"/><rect x="2" y="8" width="12" height="2" fill="#b8c4d0"/><rect x="4" y="4" width="8" height="4" fill="#98a8b8"/><rect x="8" y="1" width="5" height="6" fill="#fff" stroke="#999" stroke-width="0.5"/><rect x="9" y="2" width="2" height="2" fill="#3c3"/></svg>
<div class="t" style="left:309px;top:882px;font-size:11px;color:#000">Enhedshåndtering</div>
<svg class="a" style="left:451px;top:879px" width="16" height="16" viewBox="0 0 16 16">
<defs><radialGradient id="ffb2" cx="0.6" cy="0.35" r="0.6"><stop offset="0" stop-color="#5ac8f8"/><stop offset="1" stop-color="#1a4a98"/></radialGradient><linearGradient id="ffo2" x1="0" y1="0" x2="1" y2="1"><stop offset="0" stop-color="#f8a030"/><stop offset="0.6" stop-color="#e05a18"/><stop offset="1" stop-color="#c83a10"/></linearGradient></defs>
<circle cx="8.5" cy="7.5" r="6.5" fill="url(#ffb2)"/>
<path d="M3 2.5 Q0.5 6 1.5 10 Q3 14.5 8 15 Q13 15 15 10.5 Q14.5 8 13.5 7 Q13.5 11 10 12 Q6.5 12.5 5 10 Q4 8 5 6 Q6.5 5 7.5 4.5 Q6.5 3.5 5 4 Q4.5 3 3 2.5 Z" fill="url(#ffo2)"/>
<path d="M14 5 Q15.5 7.5 15 10" stroke="#f8d040" stroke-width="1.2" fill="none"/>
</svg>
<div class="t" style="left:470px;top:882px;font-size:11px;color:#000">MS1/Extra Ignition Hard...</div>
<svg class="a" style="left:611px;top:879px" width="16" height="16" viewBox="0 0 16 16">
<defs><radialGradient id="ffb3" cx="0.6" cy="0.35" r="0.6"><stop offset="0" stop-color="#5ac8f8"/><stop offset="1" stop-color="#1a4a98"/></radialGradient><linearGradient id="ffo3" x1="0" y1="0" x2="1" y2="1"><stop offset="0" stop-color="#f8a030"/><stop offset="0.6" stop-color="#e05a18"/><stop offset="1" stop-color="#c83a10"/></linearGradient></defs>
<circle cx="8.5" cy="7.5" r="6.5" fill="url(#ffb3)"/>
<path d="M3 2.5 Q0.5 6 1.5 10 Q3 14.5 8 15 Q13 15 15 10.5 Q14.5 8 13.5 7 Q13.5 11 10 12 Q6.5 12.5 5 10 Q4 8 5 6 Q6.5 5 7.5 4.5 Q6.5 3.5 5 4 Q4.5 3 3 2.5 Z" fill="url(#ffo3)"/>
<path d="M14 5 Q15.5 7.5 15 10" stroke="#f8d040" stroke-width="1.2" fill="none"/>
</svg>
<div class="t" style="left:630px;top:882px;font-size:11px;color:#000">New_job - Megasquirt_L...</div>
<svg class="a" style="left:773px;top:879px" width="16" height="16" viewBox="0 0 16 16"><rect x="1" y="1" width="9" height="11" fill="#e8e0a0"/><rect x="3" y="3" width="9" height="10" fill="#9ab8d8"/><rect x="6" y="11" width="8" height="3" fill="#c8d0d8"/><circle cx="8" cy="13" r="2" fill="#e0e8f0" stroke="#8898a8"/><circle cx="14" cy="13" r="1.5" fill="#e0e8f0" stroke="#8898a8"/></svg>
<div class="t" style="left:793px;top:882px;font-size:11px;font-weight:bold;letter-spacing:0.2px;color:#000">TunerStudio MS Lite! ...</div>
<!-- tray -->
<div class="a" style="left:1268px;top:876px;width:330px;height:22px;border-top:1px solid #808080;border-left:1px solid #808080;border-right:1px solid #fff;border-bottom:1px solid #fff"></div>
<svg class="a" style="left:1272px;top:878px" width="168" height="18" viewBox="0 0 168 18">
<path d="M3 2 L10 1 L10 8 L2 9 Z" fill="#f0a020"/><path d="M3 3 L7 2 L6 6 L3 7 Z" fill="#e85020"/><path d="M10 1 L19 2 L19 8 L10 8 Z" fill="#2070b8"/><path d="M2 9 L10 8 L11 16 L3 16 Z" fill="#309a40"/><path d="M10 8 L19 8 L18 17 L11 16 Z" fill="#d83020"/>
<rect x="27.5" y="1.5" width="16" height="12" rx="1" fill="#9ccaf4" stroke="#8aa8c8"/><path d="M31 8 A4.5 4.5 0 0 1 40 7" stroke="#2a70d0" stroke-width="2.4" fill="none"/><path d="M31.5 8.5 A4 4 0 0 0 39.5 8.5" stroke="#4a90e0" stroke-width="2" fill="none"/><rect x="31" y="14" width="9" height="3" fill="#888"/>
<path d="M54 4 Q57 1 61 3 Q66 2 67 6 Q69 11 65 14 Q61 17 57 15 Q52 14 52 10 Q51 6 54 4 Z" fill="#fff" stroke="#8cc820" stroke-width="1.8"/>
<rect x="76" y="1" width="13" height="14" rx="2" fill="#1a78e0"/><circle cx="82.5" cy="8" r="4.8" fill="#fff"/><path d="M79 8 L86 8 M80.5 6.3 L79 8 L80.5 9.7 M84.5 6.3 L86 8 L84.5 9.7" stroke="#1a78e0" stroke-width="1.3" fill="none"/><rect x="83.5" y="12.5" width="8" height="4" fill="#60e020" stroke="#207010" stroke-width="0.8"/>
<path d="M99 4.5 L103.5 1.5 L108 4.5 L112.5 1.5 L117 4.5 L112.5 7.5 L117 10.5 L108 16 L99 10.5 L103.5 7.5 Z" fill="#4a90e0" stroke="#2a60b0" stroke-width="0.6"/><circle cx="113" cy="13" r="4" fill="#1a8a30"/><path d="M111 13 L112.6 14.6 L115.4 11.2" stroke="#fff" stroke-width="1.3" fill="none"/>
<circle cx="131" cy="9" r="8" fill="#1a7a3a"/><path d="M127.5 5 L127.5 10.5 Q127.5 13 130.5 13 Q133.8 13 134 10.5 L134 5 M127.5 13 L127.5 16" stroke="#fff" stroke-width="2.2" fill="none"/>
<rect x="149.5" y="1.5" width="11" height="15" fill="#a8d0f4" stroke="#6a9ad0"/><rect x="151" y="3" width="3" height="3" fill="#e83020"/><rect x="155" y="3" width="3" height="3" fill="#40b030"/><rect x="151" y="7" width="3" height="3" fill="#2a70e0"/><rect x="155" y="7" width="3" height="3" fill="#f0b020"/><path d="M147 13 Q146 8 152 6 M158 4 Q165 5 162 10 Q159 13 153 13" stroke="#f0a030" stroke-width="1.5" fill="none"/>
</svg>
<svg class="a" style="left:1440px;top:878px" width="100" height="18" viewBox="0 0 100 18">
<path d="M4 2 L4 16.5" stroke="#6a6a6a" stroke-width="2.2" stroke-linecap="round"/><path d="M4 2 L4 16.5" stroke="#fff" stroke-width="0.8"/>
<path d="M5 2.5 Q8.5 1.5 11 3.5 Q13.5 5 18 4 L15.5 7 L18 9.5 Q13.5 10.5 11 9 Q8.5 7.5 5 8.5 Z" fill="#fff" stroke="#6a6a6a" stroke-width="1"/>
<rect x="30.5" y="2.5" width="10" height="14" rx="2.5" fill="#f4f4f4" stroke="#6a6a6a" stroke-width="1.2"/><rect x="32.5" y="5" width="6" height="9.5" fill="#fff" stroke="#8a8a8a" stroke-width="0.8"/>
<rect x="51.5" y="12.5" width="3" height="3.5" fill="#fff" stroke="#6a6a6a" stroke-width="0.9"/><rect x="55.5" y="9.5" width="3" height="6.5" fill="#fff" stroke="#6a6a6a" stroke-width="0.9"/><rect x="59.5" y="6.5" width="3" height="9.5" fill="#fff" stroke="#6a6a6a" stroke-width="0.9"/><rect x="63.5" y="3" width="3" height="13" fill="#fff" stroke="#6a6a6a" stroke-width="0.9"/>
<path d="M78.5 6.5 L81.5 6.5 L85.5 2.5 L85.5 16 L81.5 12 L78.5 12 Z" fill="#f8f8f8" stroke="#6a6a6a" stroke-width="1"/><path d="M88 6.5 Q90 9.25 88 12" stroke="#7a7a7a" stroke-width="1" fill="none"/>
</svg>
<div class="t" style="left:1545px;top:882px;font-size:11px;color:#000">12:01</div>
<svg class="a" style="left:1580px;top:881px" width="16" height="13" viewBox="0 0 16 13"><rect x="0.5" y="0.5" width="15" height="12" fill="#3a7ad8" stroke="#8ab0e0"/><rect x="4" y="9" width="11" height="2" fill="#222"/><circle cx="3" cy="10" r="1.5" fill="#e8a020"/></svg>
</body></html>
